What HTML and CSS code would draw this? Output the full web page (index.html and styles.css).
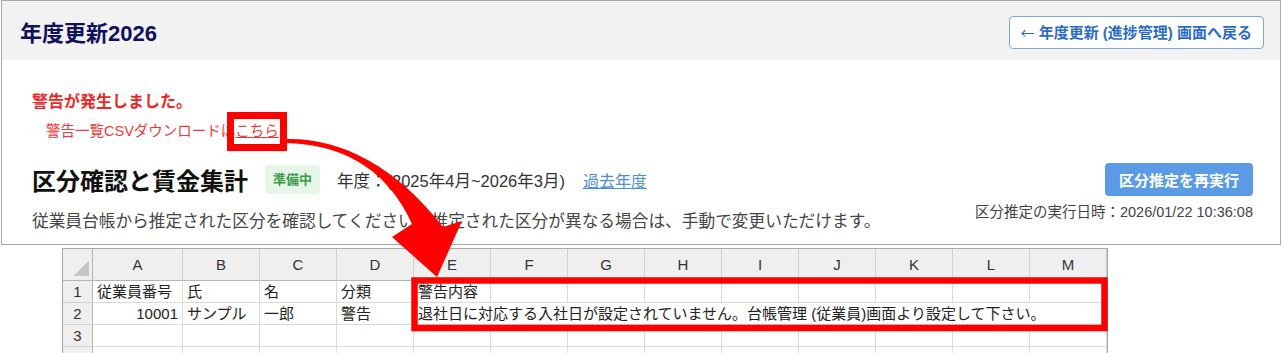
FILE: index.html
```html
<!DOCTYPE html>
<html lang="ja">
<head>
    <meta charset="UTF-8">
    <meta name="viewport" content="width=device-width, initial-scale=1.0">
    <title>年度更新2026</title>
    <link rel="stylesheet" href="styles.css">
</head>
<body>
    <div class="page">
        <div class="panel">
            <div class="panel-header">
                <h1 class="page-title">年度更新2026</h1>
                <a class="back-button" href="#"><span class="back-arrow">←</span> 年度更新 (進捗管理) 画面へ戻る</a>
            </div>
            <div class="panel-body">
                <p class="warning-title">警告が発生しました。</p>
                <p class="warning-text">警告一覧CSVダウンロードは<a class="warning-link" href="#">こちら</a></p>
                <div class="section">
                    <div class="section-main">
                        <div class="section-head">
                            <h2 class="section-title">区分確認と賃金集計</h2>
                            <span class="badge">準備中</span>
                            <span class="period">年度：(2025年4月~2026年3月)</span>
                            <a class="past-link" href="#">過去年度</a>
                        </div>
                        <p class="section-desc">従業員台帳から推定された区分を確認してください。推定された区分が異なる場合は、手動で変更いただけます。</p>
                    </div>
                    <div class="section-side">
                        <button class="rerun-button" type="button">区分推定を再実行</button>
                        <div class="run-date">区分推定の実行日時：2026/01/22 10:36:08</div>
                    </div>
                </div>
            </div>
        </div>

        <div class="sheet">
            <div class="cell corner"></div>
            <div class="cell col-head">A</div>
            <div class="cell col-head">B</div>
            <div class="cell col-head">C</div>
            <div class="cell col-head">D</div>
            <div class="cell col-head">E</div>
            <div class="cell col-head">F</div>
            <div class="cell col-head">G</div>
            <div class="cell col-head">H</div>
            <div class="cell col-head">I</div>
            <div class="cell col-head">J</div>
            <div class="cell col-head">K</div>
            <div class="cell col-head">L</div>
            <div class="cell col-head">M</div>

            <div class="cell row-head">1</div>
            <div class="cell">従業員番号</div>
            <div class="cell">氏</div>
            <div class="cell">名</div>
            <div class="cell">分類</div>
            <div class="cell">警告内容</div>
            <div class="cell"></div>
            <div class="cell"></div>
            <div class="cell"></div>
            <div class="cell"></div>
            <div class="cell"></div>
            <div class="cell"></div>
            <div class="cell"></div>
            <div class="cell"></div>

            <div class="cell row-head">2</div>
            <div class="cell num">10001</div>
            <div class="cell">サンプル</div>
            <div class="cell">一郎</div>
            <div class="cell">警告</div>
            <div class="cell spill">退社日に対応する入社日が設定されていません。台帳管理 (従業員)画面より設定して下さい。</div>

            <div class="cell row-head">3</div>
            <div class="cell"></div>
            <div class="cell"></div>
            <div class="cell"></div>
            <div class="cell"></div>
            <div class="cell"></div>
            <div class="cell"></div>
            <div class="cell"></div>
            <div class="cell"></div>
            <div class="cell"></div>
            <div class="cell"></div>
            <div class="cell"></div>
            <div class="cell"></div>
            <div class="cell"></div>

            <div class="cell row-head"></div>
            <div class="cell"></div>
            <div class="cell"></div>
            <div class="cell"></div>
            <div class="cell"></div>
            <div class="cell"></div>
            <div class="cell"></div>
            <div class="cell"></div>
            <div class="cell"></div>
            <div class="cell"></div>
            <div class="cell"></div>
            <div class="cell"></div>
            <div class="cell"></div>
            <div class="cell"></div>
        </div>

        <!-- annotation: link box, arrow, box around the warning column -->
        <svg class="callout" width="1282" height="353" viewBox="0 0 1282 353">
            <rect x="230.5" y="115.5" width="53" height="32" fill="none" stroke="#ff0000" stroke-width="7"/>
            <rect x="414.5" y="280.5" width="690" height="47.5" fill="none" stroke="#ff0000" stroke-width="6.5"/>
            <path d="M287 139 C340 138, 395 165, 443 227 L462 221 L437 277 L392 237 L412 224 C390 175, 350 145, 287 143 Z" fill="#ff0000"/>
        </svg>
    </div>
</body>
</html>
```

FILE: styles.css
```css
body {
    margin: 0;
    background-color: white;
    font-family: "Liberation Sans", "Noto Sans CJK JP", sans-serif;
    overflow: hidden;
}
.page {
    position: relative;
    width: 1282px;
    height: 353px;
}
.panel {
    margin: 0 1px;
    border: 1px solid #a9a9a9;
}
.panel-header {
    display: flex;
    align-items: center;
    justify-content: space-between;
    height: 59px;
    padding: 0 16px 0 18px;
    background-color: #f2f2f2;
}
.page-title {
    margin: 0;
    font-size: 22px;
    font-weight: bold;
    color: #10105f;
}
.back-button {
    display: block;
    height: 31px;
    line-height: 31px;
    padding: 0 11px;
    border: 1px solid #7ea7e2;
    border-radius: 4px;
    background-color: white;
    color: #2c6cc6;
    font-size: 15px;
    font-weight: bold;
    text-decoration: none;
    margin-top: 3px;
}
.back-arrow {
    font-family: "Noto Sans CJK JP", sans-serif;
    font-weight: normal;
    font-size: 14px;
}
.panel-body {
    padding: 32px 27px 10px 30px;
}
.warning-title {
    margin: 0;
    font-size: 16px;
    line-height: 20px;
    font-weight: bold;
    color: #f22424;
}
.warning-text {
    margin: 9px 0 0 14px;
    font-size: 14.5px;
    line-height: 20px;
    color: #f03a3a;
}
.warning-link {
    color: #f03a3a;
}
.section {
    display: flex;
    justify-content: space-between;
    margin-top: 22px;
}
.section-head {
    display: flex;
    align-items: center;
    height: 33px;
}
.section-title {
    margin: 0 17px 0 0;
    font-size: 24px;
    font-weight: bold;
    color: #111;
}
.badge {
    padding: 0 8px;
    height: 29px;
    line-height: 29px;
    border-radius: 4px;
    background-color: #e7f4e8;
    color: #3b9a48;
    font-size: 13px;
    font-weight: bold;
}
.period {
    margin-left: 17px;
    font-size: 16.5px;
    color: #333;
}
.past-link {
    margin-left: 18px;
    font-size: 16px;
    color: #4a8ee0;
}
.section-desc {
    margin: 14px 0 0;
    font-size: 16.7px;
    line-height: 24px;
    color: #454545;
}
.section-side {
    display: flex;
    flex-direction: column;
    align-items: flex-end;
}
.rerun-button {
    height: 33px;
    padding: 0 14px;
    border: none;
    border-radius: 4px;
    background-color: #5b9be6;
    color: white;
    font-family: inherit;
    font-size: 15px;
    font-weight: bold;
}
.run-date {
    margin-top: 7px;
    font-size: 14.5px;
    line-height: 18px;
    color: #444;
}

/* spreadsheet picture */
.sheet {
    display: grid;
    grid-template-columns: 30px 90px repeat(12, 77px);
    grid-template-rows: 32px repeat(4, 22px);
    width: 1044px;
    height: 104px;
    margin: 3px 0 0 62px;
    border: 1px solid #a8a8a8;
    overflow: hidden;
    font-size: 15px;
    color: #222;
}
.cell {
    padding: 0 4px;
    line-height: 21px;
    white-space: nowrap;
    border-right: 1px solid #dadada;
    border-bottom: 1px solid #dadada;
}
.col-head {
    background-color: #efefef;
    border-right-color: #cfcfcf;
    border-bottom-color: #b4b4b4;
    text-align: center;
    line-height: 31px;
    color: #333;
}
.row-head {
    background-color: #efefef;
    border-right-color: #b4b4b4;
    border-bottom-color: #cfcfcf;
    text-align: center;
    padding: 0;
    color: #333;
}
.corner {
    display: flex;
    align-items: flex-end;
    justify-content: flex-end;
    padding: 0 3px 4px 0;
    background-color: #efefef;
    border-right-color: #b4b4b4;
    border-bottom-color: #b4b4b4;
}
.corner::after {
    content: "";
    width: 15px;
    height: 15px;
    background: linear-gradient(to bottom right, transparent 50%, #c6c6c6 50%);
}
.num {
    text-align: right;
}
.spill {
    grid-column: span 9;
}
.callout {
    position: absolute;
    top: 0;
    left: 0;
    pointer-events: none;
}
```
